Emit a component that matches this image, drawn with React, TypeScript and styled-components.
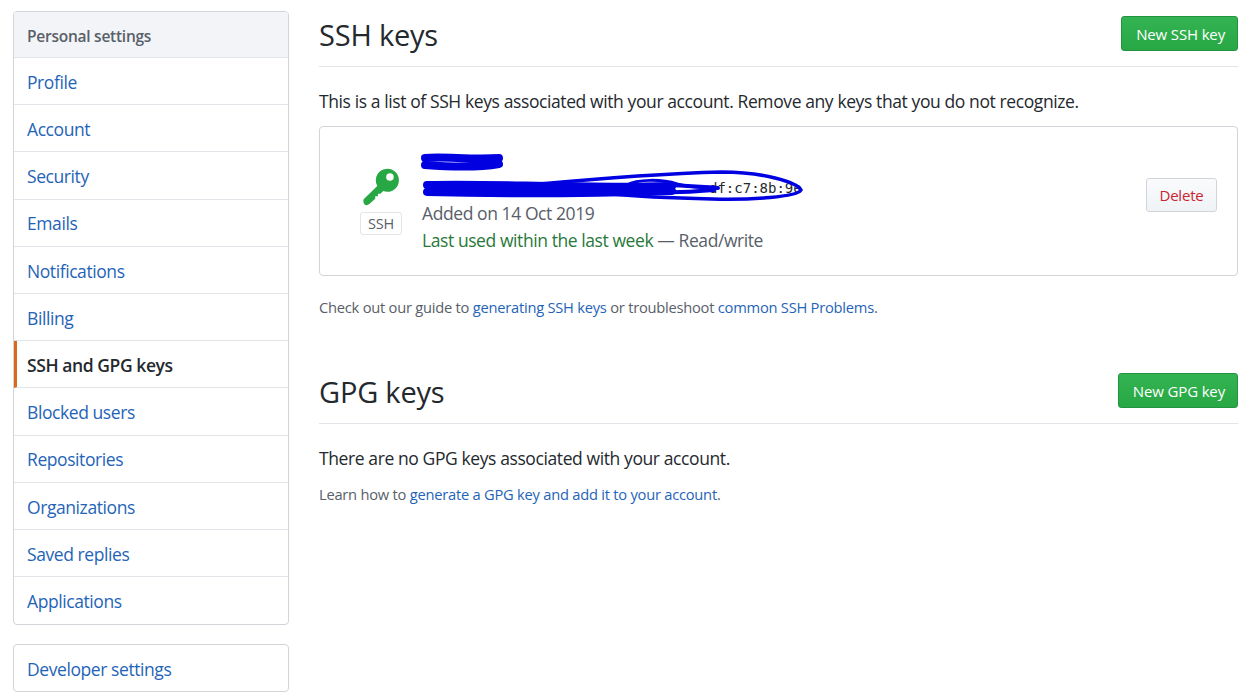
import React from 'react';
import styled, { createGlobalStyle } from 'styled-components';

const GlobalStyle = createGlobalStyle`
  html, body {
    margin: 0;
    padding: 0;
    background: #fff;
  }
  body {
    font-family: "Open Sans", "Noto Sans", "Liberation Sans", sans-serif;
    color: #24292e;
    font-size: 17.5px;
  }
  * { box-sizing: border-box; }
`;

const Page = styled.div`
  display: grid;
  grid-template-columns: 276px 919px;
  column-gap: 30px;
  padding: 11px 21px 0 13px;
  width: 1259px;
  height: 697px;
  overflow: hidden;
`;

const Sidebar = styled.nav`
  display: flex;
  flex-direction: column;
  gap: 19px;
`;

const Menu = styled.div`
  border: 1px solid #d1d5da;
  border-radius: 4px;
  overflow: hidden;
`;

const MenuHeader = styled.div`
  height: 46px;
  display: flex;
  align-items: center;
  padding: 2px 13px 0;
  background: #f3f4f7;
  color: #586069;
  font-size: 15.5px;
  font-weight: 600;
  letter-spacing: -0.25px;
  border-bottom: 1px solid #e1e4e8;
`;

const MenuItem = styled.a<{ $selected?: boolean; $short?: boolean }>`
  height: ${(p) => (p.$short ? '46px' : '47.2px')};
  display: flex;
  align-items: center;
  padding: 1.5px 13px 0 ${(p) => (p.$selected ? '10px' : '13px')};
  font-size: 17.5px;
  letter-spacing: -0.42px;
  color: ${(p) => (p.$selected ? '#24292e' : '#1f64b8')};
  font-weight: ${(p) => (p.$selected ? 600 : 400)};
  border-left: ${(p) => (p.$selected ? '3px solid #d9691f' : 'none')};
  border-bottom: 1px solid #e1e4e8;

  &:last-child {
    border-bottom: none;
  }
`;

const Main = styled.main`
  display: flex;
  flex-direction: column;
`;

const SectionHead = styled.div`
  display: flex;
  justify-content: space-between;
  align-items: center;
  height: 56px;
  padding: 5px 0 15px;
  border-bottom: 1px solid #e1e4e8;
`;

const Title = styled.h2`
  margin: 0;
  padding-top: 2px;
  font-size: 29px;
  font-weight: 400;
  letter-spacing: -0.2px;
  color: #24292e;
`;

const GreenButton = styled.button`
  height: 35px;
  padding: 0 12px 0 14px;
  border: 1px solid #22933e;
  border-radius: 3px;
  background: linear-gradient(#34b352, #28a745);
  color: #fff;
  font: 500 15px "Open Sans", sans-serif;
  letter-spacing: -0.15px;
`;

const Lead = styled.p`
  margin: 22px 0 0;
  line-height: 24px;
  font-size: 17.5px;
  letter-spacing: -0.4px;
`;

const KeyCard = styled.div`
  position: relative;
  margin-top: 13px;
  height: 150px;
  border: 1px solid #d1d5da;
  border-radius: 4px;
  display: flex;
  align-items: center;
  padding: 0 20px 0 40px;
`;

const KeyBadge = styled.div`
  display: flex;
  flex-direction: column;
  align-items: center;
  gap: 6px;
  width: 42px;
  padding-bottom: 1px;
  flex: none;
`;

const SshLabel = styled.span`
  height: 23px;
  width: 42px;
  display: flex;
  align-items: center;
  justify-content: center;
  border: 1px solid #e1e4e8;
  border-radius: 3px;
  color: #586069;
  font-size: 14.5px;
  letter-spacing: -0.2px;
`;

const KeyInfo = styled.div`
  margin-left: 20px;
  flex: 1;
  display: flex;
  flex-direction: column;
  margin-top: -2px;
`;

const KeyName = styled.div`
  height: 27px;
`;

const Fingerprint = styled.code`
  height: 27px;
  display: block;
  padding-left: 287px;
  font: 14px/30px "DejaVu Sans Mono", monospace;
  color: #24292e;
`;

const KeyMeta = styled.div`
  height: 27px;
  line-height: 27px;
  color: #586069;
  font-size: 17.5px;
  letter-spacing: -0.42px;
`;

const Used = styled.span`
  color: #28783a;
`;

const DeleteButton = styled.button`
  height: 34px;
  width: 71px;
  margin-bottom: 13px;
  border: 1px solid #d1d5da;
  border-radius: 3px;
  background: linear-gradient(#fafbfc, #eff3f6);
  color: #cb2431;
  font: 400 15px "Open Sans", sans-serif;
  letter-spacing: -0.2px;
`;

const Scribble = styled.svg`
  position: absolute;
  left: 92px;
  top: 20px;
  width: 420px;
  height: 60px;
  pointer-events: none;
`;

const Note = styled.p<{ $top: number }>`
  margin: ${(p) => p.$top}px 0 0;
  font-size: 14.7px;
  line-height: 20px;
  color: #586069;
  letter-spacing: -0.24px;
`;

const Link = styled.a`
  color: #1f64b8;
`;

const Spacer = styled.div`
  height: 51px;
`;

const items = [
  'Profile',
  'Account',
  'Security',
  'Emails',
  'Notifications',
  'Billing',
  'SSH and GPG keys',
  'Blocked users',
  'Repositories',
  'Organizations',
  'Saved replies',
  'Applications',
];

const KeyIcon = () => (
  <svg width="40" height="40" viewBox="0 0 38 38">
    <path
      fill="#28a745"
      fillRule="evenodd"
      d="M25 2.5a11 11 0 0 1 0 22c-1.4 0-2.7-.3-3.9-.8l-2.6 2.6h-2.4v2.4h-2.6v2.4l-5.3 4.8c-1.7 1.6-3.6 1.7-4.7.6s-1.6-3.4-1-5l13-12.5A11 11 0 0 1 25 2.5zm2.5 4.3a3.6 3.6 0 1 0 0 7.2 3.6 3.6 0 0 0 0-7.2z"
    />
  </svg>
);

const App = () => {
  return (
    <>
      <GlobalStyle />
      <Page>
        <Sidebar>
          <Menu>
            <MenuHeader>Personal settings</MenuHeader>
            {items.map((item) => (
              <MenuItem key={item} $selected={item === 'SSH and GPG keys'}>
                {item}
              </MenuItem>
            ))}
          </Menu>
          <Menu>
            <MenuItem $short>Developer settings</MenuItem>
          </Menu>
        </Sidebar>

        <Main>
          <SectionHead>
            <Title>SSH keys</Title>
            <GreenButton>New SSH key</GreenButton>
          </SectionHead>
          <Lead>
            This is a list of SSH keys associated with your account. Remove any
            keys that you do not recognize.
          </Lead>
          <KeyCard>
            <KeyBadge>
              <KeyIcon />
              <SshLabel>SSH</SshLabel>
            </KeyBadge>
            <KeyInfo>
              <KeyName />
              <Fingerprint>df:c7:8b:9e</Fingerprint>
              <KeyMeta>Added on 14 Oct 2019</KeyMeta>
              <KeyMeta>
                <Used>Last used within the last week</Used> — Read/write
              </KeyMeta>
            </KeyInfo>
            <DeleteButton>Delete</DeleteButton>
            {/* marker pen redaction over the key name and fingerprint */}
            <Scribble viewBox="0 0 420 60" fill="none" stroke="#0000e0" strokeLinecap="round">
              <path strokeWidth="8" d="M13 11C30 9 60 13 87 11M13 18C40 20 70 20 87 17" />
              <path strokeWidth="8" d="M15 38C90 36 150 42 260 39M15 45C90 47 160 47 260 44" />
              <path strokeWidth="4" d="M250 38C270 38 290 40 306 41M250 45C270 46 290 44 302 43" />
              <path
                strokeWidth="3.5"
                d="M118 38C160 34 230 27 310 25C350 25 385 35 389 43C385 50 340 53 300 52C260 51 230 50 200 47"
              />
              <path strokeWidth="3" d="M215 38C225 32 250 32 265 37C280 41 290 40 300 41" />
            </Scribble>
          </KeyCard>
          <Note $top={21}>
            Check out our guide to <Link>generating SSH keys</Link> or
            troubleshoot <Link>common SSH Problems</Link>.
          </Note>
          <Spacer />
          <SectionHead>
            <Title>GPG keys</Title>
            <GreenButton>New GPG key</GreenButton>
          </SectionHead>
          <Lead>There are no GPG keys associated with your account.</Lead>
          <Note $top={14}>
            Learn how to <Link>generate a GPG key and add it to your account</Link>.
          </Note>
        </Main>
      </Page>
    </>
  );
};

export default App;
